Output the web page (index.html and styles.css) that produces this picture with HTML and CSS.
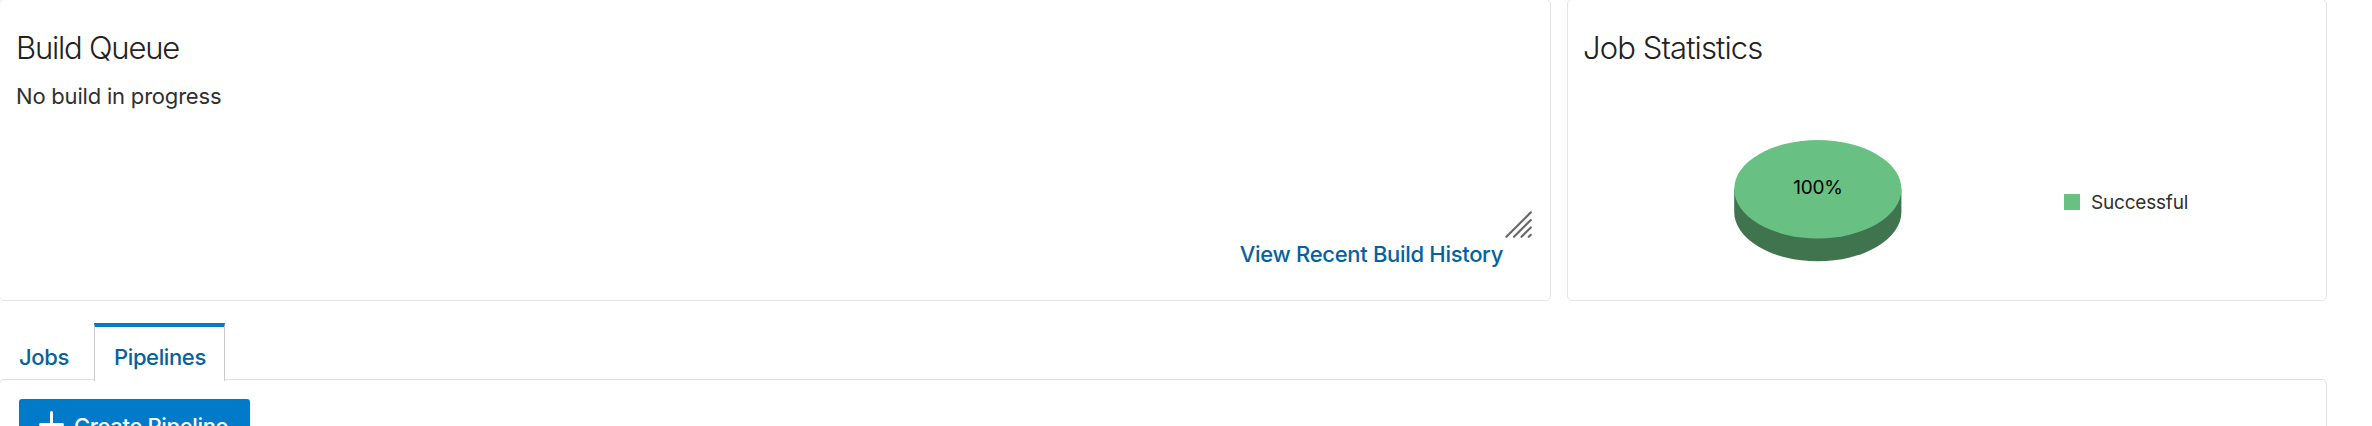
FILE: index.html
```html
<!DOCTYPE html>
<html lang="en">
<head>
<meta charset="utf-8">
<title>Build Dashboard</title>
<link rel="stylesheet" href="styles.css">
</head>
<body>
<main class="page">
  <div class="cards">
    <section class="card queue">
      <h2 class="title title-queue">Build Queue</h2>
      <p class="message">No build in progress</p>
      <svg class="grip" width="28" height="28" viewBox="0 0 28 28"><path d="M2.4 26.8 26.8 2.4M10 26.8 26.8 10M17.5 26.8 26.8 17.5M24.8 26.8 26.8 24.8"/></svg>
      <a class="history">View Recent Build History</a>
    </section>
    <section class="card stats">
      <h2 class="title title-stats">Job Statistics</h2>
      <div class="chart">
        <svg class="pie" width="168" height="122" viewBox="0 0 168 122">
          <path class="pie-side" d="M.2 49V72A83.6 49.2 0 0 0 167.4 72V49z"/>
          <ellipse class="pie-top" cx="83.8" cy="49.2" rx="83.6" ry="49.2"/>
          <text class="pie-label" x="84" y="54" text-anchor="middle">100%</text>
        </svg>
        <div class="legend"><span class="swatch"></span><span class="legend-text">Successful</span></div>
      </div>
    </section>
  </div>
  <nav class="tabs">
    <a class="tab jobs">Jobs</a>
    <a class="tab active">Pipelines</a>
  </nav>
  <section class="panel">
    <button class="create">
      <svg class="plus" width="25" height="25" viewBox="0 0 25 25"><path d="M12.5 1.5v22M1.5 13.5h22"/></svg>
      <span class="create-text">Create Pipeline</span>
    </button>
  </section>
</main>
</body>
</html>
```
FILE: styles.css
```css
* { box-sizing: border-box; }
body {
  margin: 0;
  background: #fff;
  color: #303030;
  font-family: Inter, "Liberation Sans", sans-serif;
  font-size: 22px;
}
.page { width: 2372px; height: 426px; overflow: hidden; }
.cards { display: flex; gap: 16px; margin: -1px 0 0 -1px; }
.card {
  display: flex;
  flex-direction: column;
  height: 302px;
  border: 1px solid #e4e4e4;
  border-radius: 5px;
  padding: 28px 16px 0;
}
.queue { width: 1552px; }
.stats { width: 760px; padding-left: 15px; }
.title {
  margin: 0;
  font-size: 31px;
  line-height: 40px;
  font-weight: 340;
  color: #222;
  white-space: nowrap;
}
.title-queue { letter-spacing: -1.2px; }
.title-stats { letter-spacing: -0.88px; }
.message { margin: 13px 0 0; line-height: 30px; letter-spacing: -0.2px; }
.grip { align-self: flex-end; margin: 99px 2px 0 0; }
.grip path { stroke: #696969; stroke-width: 2.2; stroke-linecap: round; }
.history {
  align-self: flex-end;
  margin: 1px 31px 0 0;
  line-height: 30px;
  font-weight: 450;
  letter-spacing: -0.31px;
  color: #04629f;
}
.chart { display: flex; margin: 72px 0 0 151px; }
.pie { flex: none; }
.pie-side { fill: #40744e; }
.pie-top { fill: #68c182; }
.pie-label { font-size: 19px; letter-spacing: -0.2px; fill: #000; }
.legend { display: flex; align-items: center; height: 24px; margin: 50px 0 0 162px; font-size: 19px; letter-spacing: -0.2px; }
.swatch { width: 16px; height: 16px; margin-right: 11px; background: #68c182; }
.tabs { display: flex; margin-top: 22px; height: 58px; position: relative; }
.tab {
  height: 58px;
  padding-top: 19px;
  line-height: 30px;
  font-weight: 450;
  letter-spacing: -0.38px;
  color: #04629f;
}
.jobs { width: 94px; padding-left: 19px; }
.active {
  width: 131px;
  padding: 15px 0 0 19px;
  border: 1px solid #ccc;
  border-top: 4px solid #007ac9;
  border-bottom: 0;
  background: #fff;
}
.panel {
  width: 2328px;
  height: 100px;
  margin: -2px 0 0 -1px;
  padding: 19px;
  border: 1px solid #dfdfdf;
  border-radius: 5px;
}
.create {
  display: flex;
  align-items: flex-start;
  width: 231px;
  height: 52px;
  padding: 12px 0 0 20px;
  border: 0;
  border-radius: 3px;
  background: #007ac9;
  color: #fff;
  font: 450 22px/30px Inter, "Liberation Sans", sans-serif;
  letter-spacing: -0.35px;
  white-space: nowrap;
}
.plus { flex: none; margin-right: 10px; }
.plus path { stroke: #fff; stroke-width: 3; stroke-linecap: round; }
```
